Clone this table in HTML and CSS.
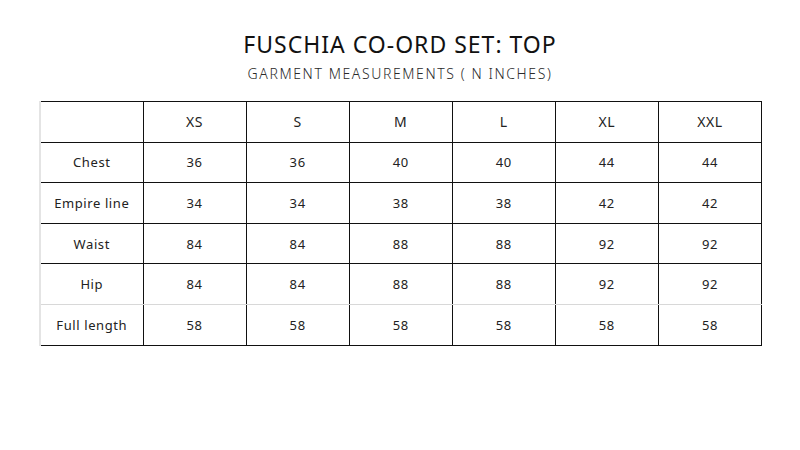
FILE: index.html
```html
<!DOCTYPE html>
<html>
<head>
<meta charset="utf-8">
<link rel="stylesheet" href="styles.css">
</head>
<body>
<div class="page">
  <h1 class="title">FUSCHIA CO-ORD SET: TOP</h1>
  <p class="subtitle">GARMENT MEASUREMENTS ( N INCHES)</p>
  <table class="sizes">
    <tr class="head"><td></td><td>XS</td><td>S</td><td>M</td><td>L</td><td>XL</td><td>XXL</td></tr>
    <tr><td>Chest</td><td>36</td><td>36</td><td>40</td><td>40</td><td>44</td><td>44</td></tr>
    <tr><td>Empire line</td><td>34</td><td>34</td><td>38</td><td>38</td><td>42</td><td>42</td></tr>
    <tr><td>Waist</td><td>84</td><td>84</td><td>88</td><td>88</td><td>92</td><td>92</td></tr>
    <tr class="hip"><td>Hip</td><td>84</td><td>84</td><td>88</td><td>88</td><td>92</td><td>92</td></tr>
    <tr class="last"><td>Full length</td><td>58</td><td>58</td><td>58</td><td>58</td><td>58</td><td>58</td></tr>
  </table>
</div>
</body>
</html>
```
FILE: styles.css
```css
html, body {
  margin: 0;
  padding: 0;
  background: #ffffff;
}
body {
  font-family: "Noto Sans", "DejaVu Sans", sans-serif;
  color: #1a1a1a;
}
.page {
  width: 800px;
  height: 450px;
  display: flex;
  flex-direction: column;
  align-items: center;
}
.title {
  margin: 30px 0 0 0;
  font-size: 23px;
  font-weight: 400;
  letter-spacing: 1px;
  line-height: 28px;
  color: #111;
}
.subtitle {
  margin: 7px 0 0 0;
  font-size: 14px;
  font-weight: 300;
  letter-spacing: 1.6px;
  line-height: 18px;
  color: #2a2a2a;
}
.sizes {
  margin-top: 18px;
  border-collapse: collapse;
  width: 723px;
  margin-left: 1px;
  table-layout: fixed;
}
.sizes td {
  border: 1px solid #111;
  height: 39.6px;
  padding: 0;
  text-align: center;
  font-size: 13px;
  letter-spacing: 0.6px;
  color: #222;
}
.sizes tr td:first-child {
  border-left: 2px solid #e4e4e4;
}
.sizes tr.hip td {
  border-bottom: 1px solid #d8d8d8;
}
.sizes tr.head td {
  font-size: 14px;
}
```
